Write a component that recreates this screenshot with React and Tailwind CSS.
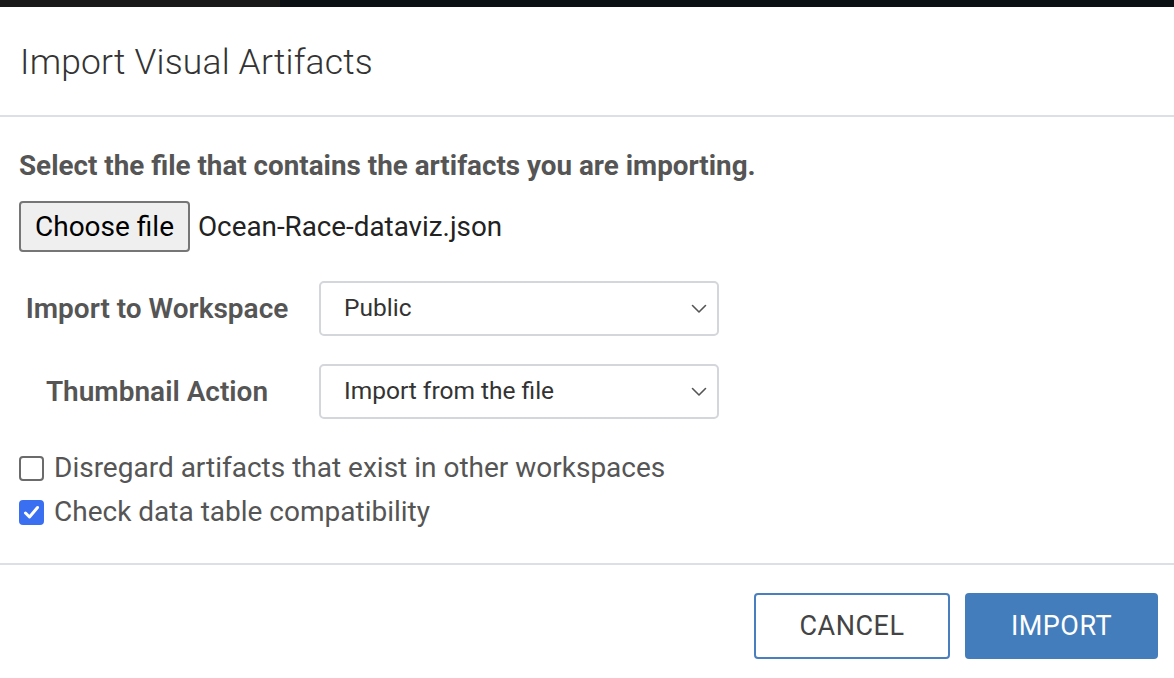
import { useState } from "react";

function Chevron() {
  return (
    <svg width="16" height="10" viewBox="0 0 16 10" fill="none" className="shrink-0">
      <path d="M1.5 1.5 L8 8 L14.5 1.5" stroke="#555" strokeWidth="1.6" strokeLinecap="round" strokeLinejoin="round" />
    </svg>
  );
}

function SelectBox({ value }) {
  return (
    <div className="w-[400px] h-[55px] flex items-center justify-between pl-[23px] pr-[10px] border-2 border-[#d3d6da] rounded-[5px] text-[24.5px] text-[#333]">
      <span>{value}</span>
      <Chevron />
    </div>
  );
}

function Checkbox({ checked, label, onToggle }) {
  return (
    <label className="flex items-center gap-[10px] cursor-pointer" onClick={onToggle}>
      {checked ? (
        <span className="w-[25px] h-[25px] rounded-[4px] bg-[#3a6ff2] flex items-center justify-center">
          <svg width="17" height="15" viewBox="0 0 17 15" fill="none">
            <path d="M2.5 8 L6.5 12 L14.5 2.5" stroke="#fff" strokeWidth="3" strokeLinecap="round" strokeLinejoin="round" />
          </svg>
        </span>
      ) : (
        <span className="w-[25px] h-[25px] rounded-[4px] border-2 border-[#6b6b6b] bg-white" />
      )}
      <span className="text-[28px] leading-[32px] text-[#555]">{label}</span>
    </label>
  );
}

export default function App() {
  const [disregard, setDisregard] = useState(false);
  const [checkCompat, setCheckCompat] = useState(true);

  return (
    <div className="w-[1174px] h-[678px] bg-white flex flex-col font-['Roboto',sans-serif] overflow-hidden">
      <div className="h-[7px] flex shrink-0">
        <div className="w-[280px] bg-[#1a1a1b]" />
        <div className="flex-1 bg-[#0b1014]" />
      </div>

      {/* header */}
      <div className="h-[110px] flex items-center px-[20px] pt-[4px] border-b-2 border-[#dcdfe3] shrink-0">
        <h1 className="text-[35.4px] font-light text-[#333] tracking-[0.2px]">Import Visual Artifacts</h1>
      </div>

      {/* body */}
      <div className="flex-1 flex flex-col px-[19px] pt-[33px]">
        <p className="text-[27.8px] font-bold text-[#555] leading-[32px]">
          Select the file that contains the artifacts you are importing.
        </p>

        <div className="flex items-center mt-[19px] gap-[8px]">
          <button className="w-[171px] h-[51px] bg-[#efefef] border-2 border-[#767676] rounded-[4px] text-[28px] leading-[32px] text-black">
            Choose file
          </button>
          <span className="text-[27.8px] leading-[32px] text-[#222]">Ocean-Race-dataviz.json</span>
        </div>

        <div className="grid grid-cols-[276px_400px] gap-x-[24px] gap-y-[28px] items-center mt-[29px]">
          <span className="text-center text-[28px] font-semibold text-[#555]">Import to Workspace</span>
          <SelectBox value="Public" />
          <span className="text-center text-[28px] font-semibold text-[#555]">Thumbnail Action</span>
          <SelectBox value="Import from the file" />
        </div>

        <div className="flex flex-col gap-[12px] mt-[33px]">
          <Checkbox
            checked={disregard}
            label="Disregard artifacts that exist in other workspaces"
            onToggle={() => setDisregard(!disregard)}
          />
          <Checkbox
            checked={checkCompat}
            label="Check data table compatibility"
            onToggle={() => setCheckCompat(!checkCompat)}
          />
        </div>
      </div>

      {/* footer */}
      <div className="h-[115px] shrink-0 border-t-2 border-[#dcdfe3] flex justify-end items-start pt-[28px] pr-[16px] gap-[15px]">
        <button className="w-[196px] h-[66px] border-2 border-[#4a7fbf] rounded-[4px] bg-white text-[27px] text-[#444] tracking-[0.5px]">
          CANCEL
        </button>
        <button className="w-[193px] h-[66px] rounded-[4px] bg-[#437dbb] text-[27px] text-white tracking-[0.5px]">
          IMPORT
        </button>
      </div>
    </div>
  );
}
